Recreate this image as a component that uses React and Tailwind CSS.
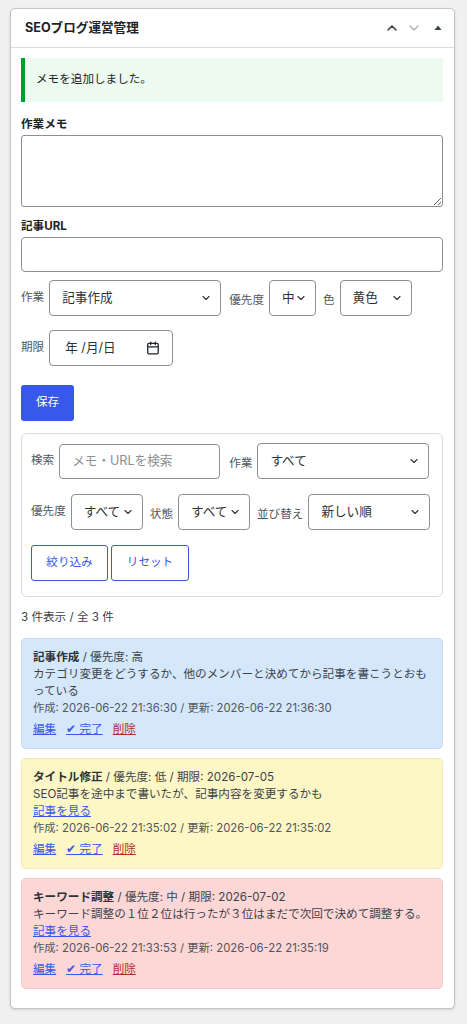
import { ChevronDown, ChevronUp, Calendar } from "lucide-react";

const font = { fontFamily: '"Inter", "Noto Sans CJK JP", sans-serif' };

function Select({ value, width }) {
  return (
    <div className={`relative h-[36px] ${width}`}>
      <div className="h-full w-full flex items-center rounded-[4px] border border-[#8c8f94] bg-white pl-[12px] pr-[24px] text-[12.6px] text-[#2c3338] whitespace-nowrap">
        {value}
      </div>
      <ChevronDown
        size={12}
        strokeWidth={2.2}
        className="absolute right-[9px] top-1/2 -translate-y-1/2 text-[#2c3338]"
      />
    </div>
  );
}

function Label({ children }) {
  return <span className="text-[11.6px] text-[#50575e] mr-[5px] whitespace-nowrap">{children}</span>;
}

function Memo({ bg, type, rest, body, link, meta }) {
  return (
    <div className={`rounded-[5px] border border-black/5 ${bg} pl-[11px] pr-[10px] pt-[10px] pb-[10px] text-[11.6px] leading-[17px] text-[#3c434a]`}>
      <div>
        <span className="font-bold text-[#2c3338]">{type}</span> {rest}
      </div>
      <div>{body}</div>
      {link && (
        <div>
          <a href="#" className="text-[#3858e9] underline">記事を見る</a>
        </div>
      )}
      <div className="text-[11.3px] text-[#50575e]">{meta}</div>
      <div className="mt-[4px] flex gap-[10px]">
        <a href="#" className="text-[#3858e9] underline">編集</a>
        <a href="#" className="text-[#3858e9] underline">✔ 完了</a>
        <a href="#" className="text-[#b32d2e] underline">削除</a>
      </div>
    </div>
  );
}

export default function App() {
  return (
    <div className="min-h-[1024px] bg-[#f0f0f1] pt-[8px] pl-[10px]" style={font}>
      <div className="w-[445px] bg-white border border-[#c3c4c7] rounded-[5px] shadow-sm">
        {/* header */}
        <div className="h-[39px] flex items-center justify-between border-b border-[#dcdcde] pl-[14px] pr-[8px]">
          <h2 className="text-[12.6px] font-bold text-[#1d2327]">SEOブログ運営管理</h2>
          <div className="flex items-center gap-[6px]">
            <ChevronUp size={16} strokeWidth={2.4} className="text-[#3c434a]" />
            <ChevronDown size={16} strokeWidth={1.8} className="text-[#a7aaad]" />
            <svg width="16" height="16" viewBox="0 0 16 16" className="ml-[2px]">
              <path d="M4.5 10 L8 5.5 L11.5 10 Z" fill="#3c434a" />
            </svg>
          </div>
        </div>

        <div className="pl-[10px] pr-[11px] pt-[10px] pb-[19px]">
          {/* notice */}
          <div className="h-[44px] flex items-center border-l-4 border-[#00a32a] bg-[#edfaef] pl-[11px] text-[11.6px] text-[#1d2327]">
            メモを追加しました。
          </div>

          <div className="mt-[12px] text-[11.6px] leading-[20px] font-bold text-[#1d2327]">作業メモ</div>
          <textarea className="mt-[1px] block w-full h-[72px] rounded-[3px] border border-[#8c8f94] bg-white"></textarea>

          <div className="mt-[9px] text-[11.6px] leading-[20px] font-bold text-[#1d2327]">記事URL</div>
          <div className="mt-[1px] h-[35px] w-full rounded-[4px] border border-[#8c8f94] bg-white"></div>

          <div className="mt-[8px] flex items-center">
            <Label>作業</Label>
            <Select value="記事作成" width="w-[172px]" />
            <span className="ml-[8px]"><Label>優先度</Label></span>
            <Select value="中" width="w-[47px]" />
            <span className="ml-[7px]"><Label>色</Label></span>
            <Select value="黄色" width="w-[72px]" />
          </div>

          <div className="mt-[14px] flex items-center">
            <Label>期限</Label>
            <div className="h-[36px] w-[124px] flex items-center justify-between rounded-[4px] border border-[#8c8f94] bg-white pl-[15px] pr-[12px] text-[12.6px] text-[#2c3338]">
              <span>年 /月/日</span>
              <Calendar size={14} strokeWidth={2.2} className="text-[#1d2327]" />
            </div>
          </div>

          <button className="mt-[19px] h-[36px] w-[53px] rounded-[3px] bg-[#3858e9] text-white text-[11.6px]">
            保存
          </button>

          {/* filter */}
          <div className="mt-[12px] rounded-[6px] border border-[#dcdcde] pl-[9px] pr-[10px] pt-[9px] pb-[15px]">
            <div className="flex items-center">
              <Label>検索</Label>
              <div className="h-[35px] w-[161px] flex items-center rounded-[4px] border border-[#8c8f94] bg-white pl-[12px] text-[12.6px] text-[#8c8f94]">
                メモ・URLを検索
              </div>
              <span className="ml-[9px]"><Label>作業</Label></span>
              <Select value="すべて" width="w-[172px]" />
            </div>
            <div className="mt-[15px] flex items-center">
              <Label>優先度</Label>
              <Select value="すべて" width="w-[72px]" />
              <span className="ml-[7px]"><Label>状態</Label></span>
              <Select value="すべて" width="w-[72px]" />
              <span className="ml-[7px]"><Label>並び替え</Label></span>
              <Select value="新しい順" width="w-[122px]" />
            </div>
            <div className="mt-[15px] flex gap-[3px]">
              <button className="h-[36px] w-[77px] rounded-[3px] border border-[#3858e9] bg-white text-[11.6px] text-[#3858e9]">
                絞り込み
              </button>
              <button className="h-[36px] w-[78px] rounded-[3px] border border-[#3858e9] bg-white text-[11.6px] text-[#3858e9]">
                リセット
              </button>
            </div>
          </div>

          <div className="mt-[10px] text-[11.6px] leading-[20px] text-[#3c434a]">3 件表示 / 全 3 件</div>

          <div className="mt-[11px] flex flex-col gap-[9px]">
            <Memo
              bg="bg-[#d5e7fb]"
              type="記事作成"
              rest="/ 優先度: 高"
              body="カテゴリ変更をどうするか、他のメンバーと決めてから記事を書こうとおもっている"
              meta="作成: 2026-06-22 21:36:30 / 更新: 2026-06-22 21:36:30"
            />
            <Memo
              bg="bg-[#fdf6c5]"
              type="タイトル修正"
              rest="/ 優先度: 低 / 期限: 2026-07-05"
              body="SEO記事を途中まで書いたが、記事内容を変更するかも"
              link
              meta="作成: 2026-06-22 21:35:02 / 更新: 2026-06-22 21:35:02"
            />
            <Memo
              bg="bg-[#fdd6d6]"
              type="キーワード調整"
              rest="/ 優先度: 中 / 期限: 2026-07-02"
              body="キーワード調整の１位２位は行ったが３位はまだで次回で決めて調整する。"
              link
              meta="作成: 2026-06-22 21:33:53 / 更新: 2026-06-22 21:35:19"
            />
          </div>
        </div>
      </div>
    </div>
  );
}
